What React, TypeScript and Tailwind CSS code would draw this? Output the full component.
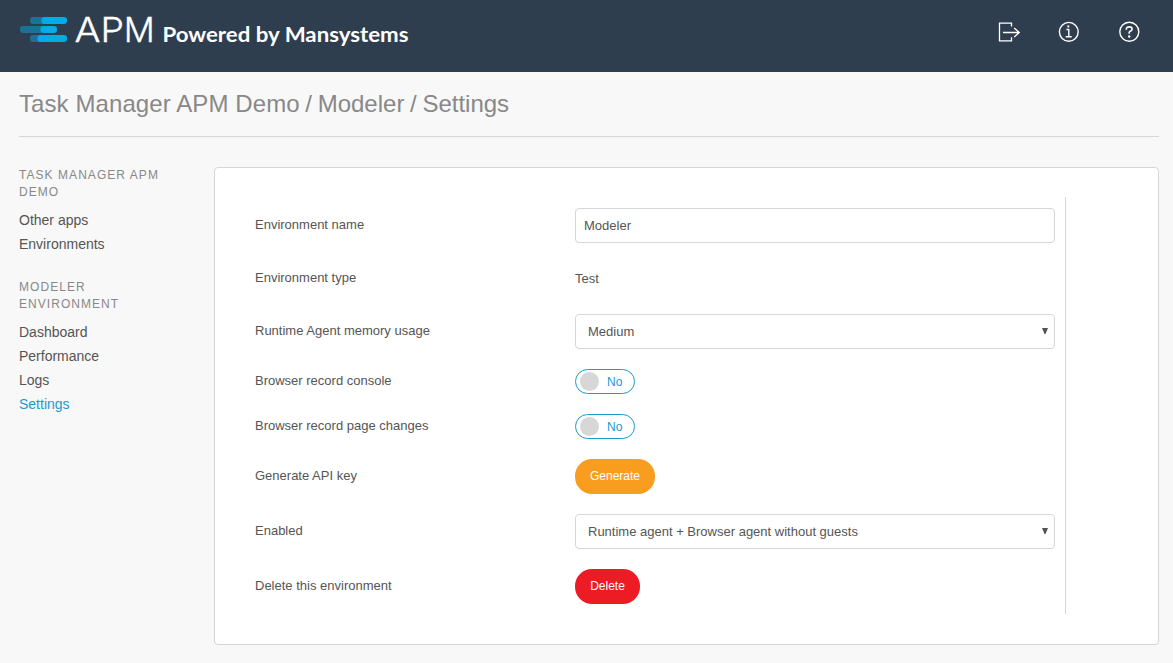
import type { ReactNode } from "react";

function Logo() {
  return (
    <svg width="48" height="26" viewBox="0 0 48 26" className="mt-[17px] shrink-0">
      <g fill="#1a7396">
        <rect x="10" y="0" width="22" height="7" rx="3" />
        <rect x="0" y="9" width="30" height="7" rx="3" />
        <rect x="10" y="18" width="22" height="7" rx="3" />
      </g>
      <g fill="#02ace8">
        <rect x="21.5" y="0" width="25.5" height="7" rx="3" />
        <rect x="20.5" y="9" width="16.5" height="7" rx="3" />
        <rect x="17.5" y="18" width="29.5" height="7" rx="3" />
      </g>
    </svg>
  );
}

function TopBar() {
  return (
    <header className="flex h-[72px] items-start bg-[#2f3e4e] pl-5 pr-[33px] text-white">
      <Logo />
      <svg width="345" height="56" className="ml-[7px] shrink-0" fill="#fff">
        <text y="42" fontSize="34.4" fontWeight="300" fontFamily="Inter, sans-serif" stroke="#fff" strokeWidth="0.3">
          <tspan x="-0.5" textLength="26" lengthAdjust="spacingAndGlyphs">A</tspan>
          <tspan x="25.6" textLength="23.5" lengthAdjust="spacingAndGlyphs">P</tspan>
          <tspan x="48.8" textLength="31" lengthAdjust="spacingAndGlyphs">M</tspan>
        </text>
        <text x="87.5" y="42" fontSize="20" fontWeight="700" fontFamily="Lato, sans-serif" textLength="246" lengthAdjust="spacingAndGlyphs">Powered by Mansystems</text>
      </svg>
      <nav className="ml-auto mt-[21px] flex gap-[38px]">
        <svg width="22" height="22" viewBox="0 0 22 22" fill="none" stroke="#fff" strokeWidth="1.3">
          <path d="M13.5 5.4V2.1H1.5v17.8h12V16.2M5 11.5h16.2M16.2 7l5 4.5-5 4.5" />
        </svg>
        <svg width="22" height="22" viewBox="0 0 22 22" fill="none" stroke="#fff" strokeWidth="1.4">
          <circle cx="10.8" cy="10.8" r="9.4" />
          <path d="M8.4 8.5h2.4v7.2M7.7 15.8h6" />
          <circle cx="10.3" cy="5.4" r="1.1" fill="#fff" stroke="none" />
        </svg>
        <svg width="22" height="22" viewBox="0 0 22 22" fill="none" stroke="#fff" strokeWidth="1.4">
          <circle cx="11.3" cy="10.8" r="9.5" />
          <path d="M8.4 8.8V7.3q.5-1.4 2.9-1.4 2.8 0 2.8 2.2 0 1.6-1.7 2.1-1.2.4-1.2 1.4v1.1" strokeWidth="1.6" />
          <circle cx="11.2" cy="15.5" r="1.2" fill="#fff" stroke="none" />
        </svg>
      </nav>
    </header>
  );
}

function NavGroup({ title, items, active }: { title: string; items: string[]; active?: string }) {
  return (
    <section className="mb-[23px]">
      <h2 className="mb-[7px] w-[160px] text-[12px] leading-[17px] tracking-[1.05px] text-[#888] uppercase">{title}</h2>
      <ul>
        {items.map((item) => (
          <li key={item} className={item === active ? "text-[14px] leading-6 text-[#1a9bd0]" : "text-[14px] leading-6 text-[#555]"}>
            {item}
          </li>
        ))}
      </ul>
    </section>
  );
}

function Row({ label, gap, labelTop = "pt-2", children }: { label: string; gap: string; labelTop?: string; children: ReactNode }) {
  return (
    <div className={`flex items-start ${gap}`}>
      <div className={`w-[320px] shrink-0 leading-[17px] ${labelTop}`}>{label}</div>
      {children}
    </div>
  );
}

function SelectBox({ value }: { value: string }) {
  return (
    <div className="flex h-[35px] w-[480px] items-center justify-between rounded-[4px] border border-[#d4d6d7] bg-white pr-[6px] pl-3">
      <span>{value}</span>
      <svg width="6" height="6" viewBox="0 0 6 6" className="mb-[2px]" fill="#555">
        <path d="M0 0h6L3.5 6h-1z" />
      </svg>
    </div>
  );
}

function Toggle() {
  return (
    <div className="flex h-[25px] w-[60px] items-center rounded-[12.5px] border border-[#1a9bd0] bg-white pl-1 text-[12px] text-[#1a9bd0]">
      <span className="size-[19px] rounded-full bg-[#d7d7d7]" />
      <span className="ml-2">No</span>
    </div>
  );
}

export default function App() {
  return (
    <div className="h-[663px] w-[1173px] overflow-hidden bg-[#f8f8f8] font-['Liberation_Sans',Arial,sans-serif] text-[13px] text-[#555]">
      <TopBar />
      <div className="ml-[19px] mr-[14px] h-[65px] border-b border-[#d7d7d7] pt-[17px]">
        <h1 className="text-[24px] leading-[30px] text-[#888]">
          <span className="tracking-[0.09px]">Task Manager APM Demo</span>
          <span className="[word-spacing:-1px]"> / Modeler / </span>
          <span>Settings</span>
        </h1>
      </div>
      <div className="flex pt-[30px] pr-[14px] pl-[19px]">
        <aside className="w-[195px] shrink-0">
          <NavGroup title="Task Manager APM Demo" items={["Other apps", "Environments"]} />
          <NavGroup title="Modeler Environment" items={["Dashboard", "Performance", "Logs", "Settings"]} active="Settings" />
        </aside>
        <main className="h-[478px] flex-1 rounded-[4px] border border-[#d4d6d7] bg-white pt-[29px] pl-[40px]">
          <div className="h-[417px] w-[811px] border-r border-[#d4d6d7] pt-[11px]">
            <Row label="Environment name" gap="">
              <div className="flex h-[35px] w-[480px] items-center rounded-[4px] border border-[#d4d6d7] px-2">Modeler</div>
            </Row>
            <Row label="Environment type" gap="mt-[18px]">
              <div className="flex h-[35px] items-center">Test</div>
            </Row>
            <Row label="Runtime Agent memory usage" gap="mt-[18px]">
              <SelectBox value="Medium" />
            </Row>
            <Row label="Browser record console" gap="mt-5" labelTop="pt-[3px]">
              <Toggle />
            </Row>
            <Row label="Browser record page changes" gap="mt-5" labelTop="pt-[3px]">
              <Toggle />
            </Row>
            <Row label="Generate API key" gap="mt-5">
              <button className="h-[35px] w-[80px] rounded-[17px] bg-[#f99d1f] pb-[2px] text-[12px] text-white">Generate</button>
            </Row>
            <Row label="Enabled" gap="mt-5">
              <SelectBox value="Runtime agent + Browser agent without guests" />
            </Row>
            <Row label="Delete this environment" gap="mt-5">
              <button className="h-[35px] w-[65px] rounded-[17px] bg-[#ed1c24] pb-[2px] text-[12px] text-white">Delete</button>
            </Row>
          </div>
        </main>
      </div>
    </div>
  );
}
